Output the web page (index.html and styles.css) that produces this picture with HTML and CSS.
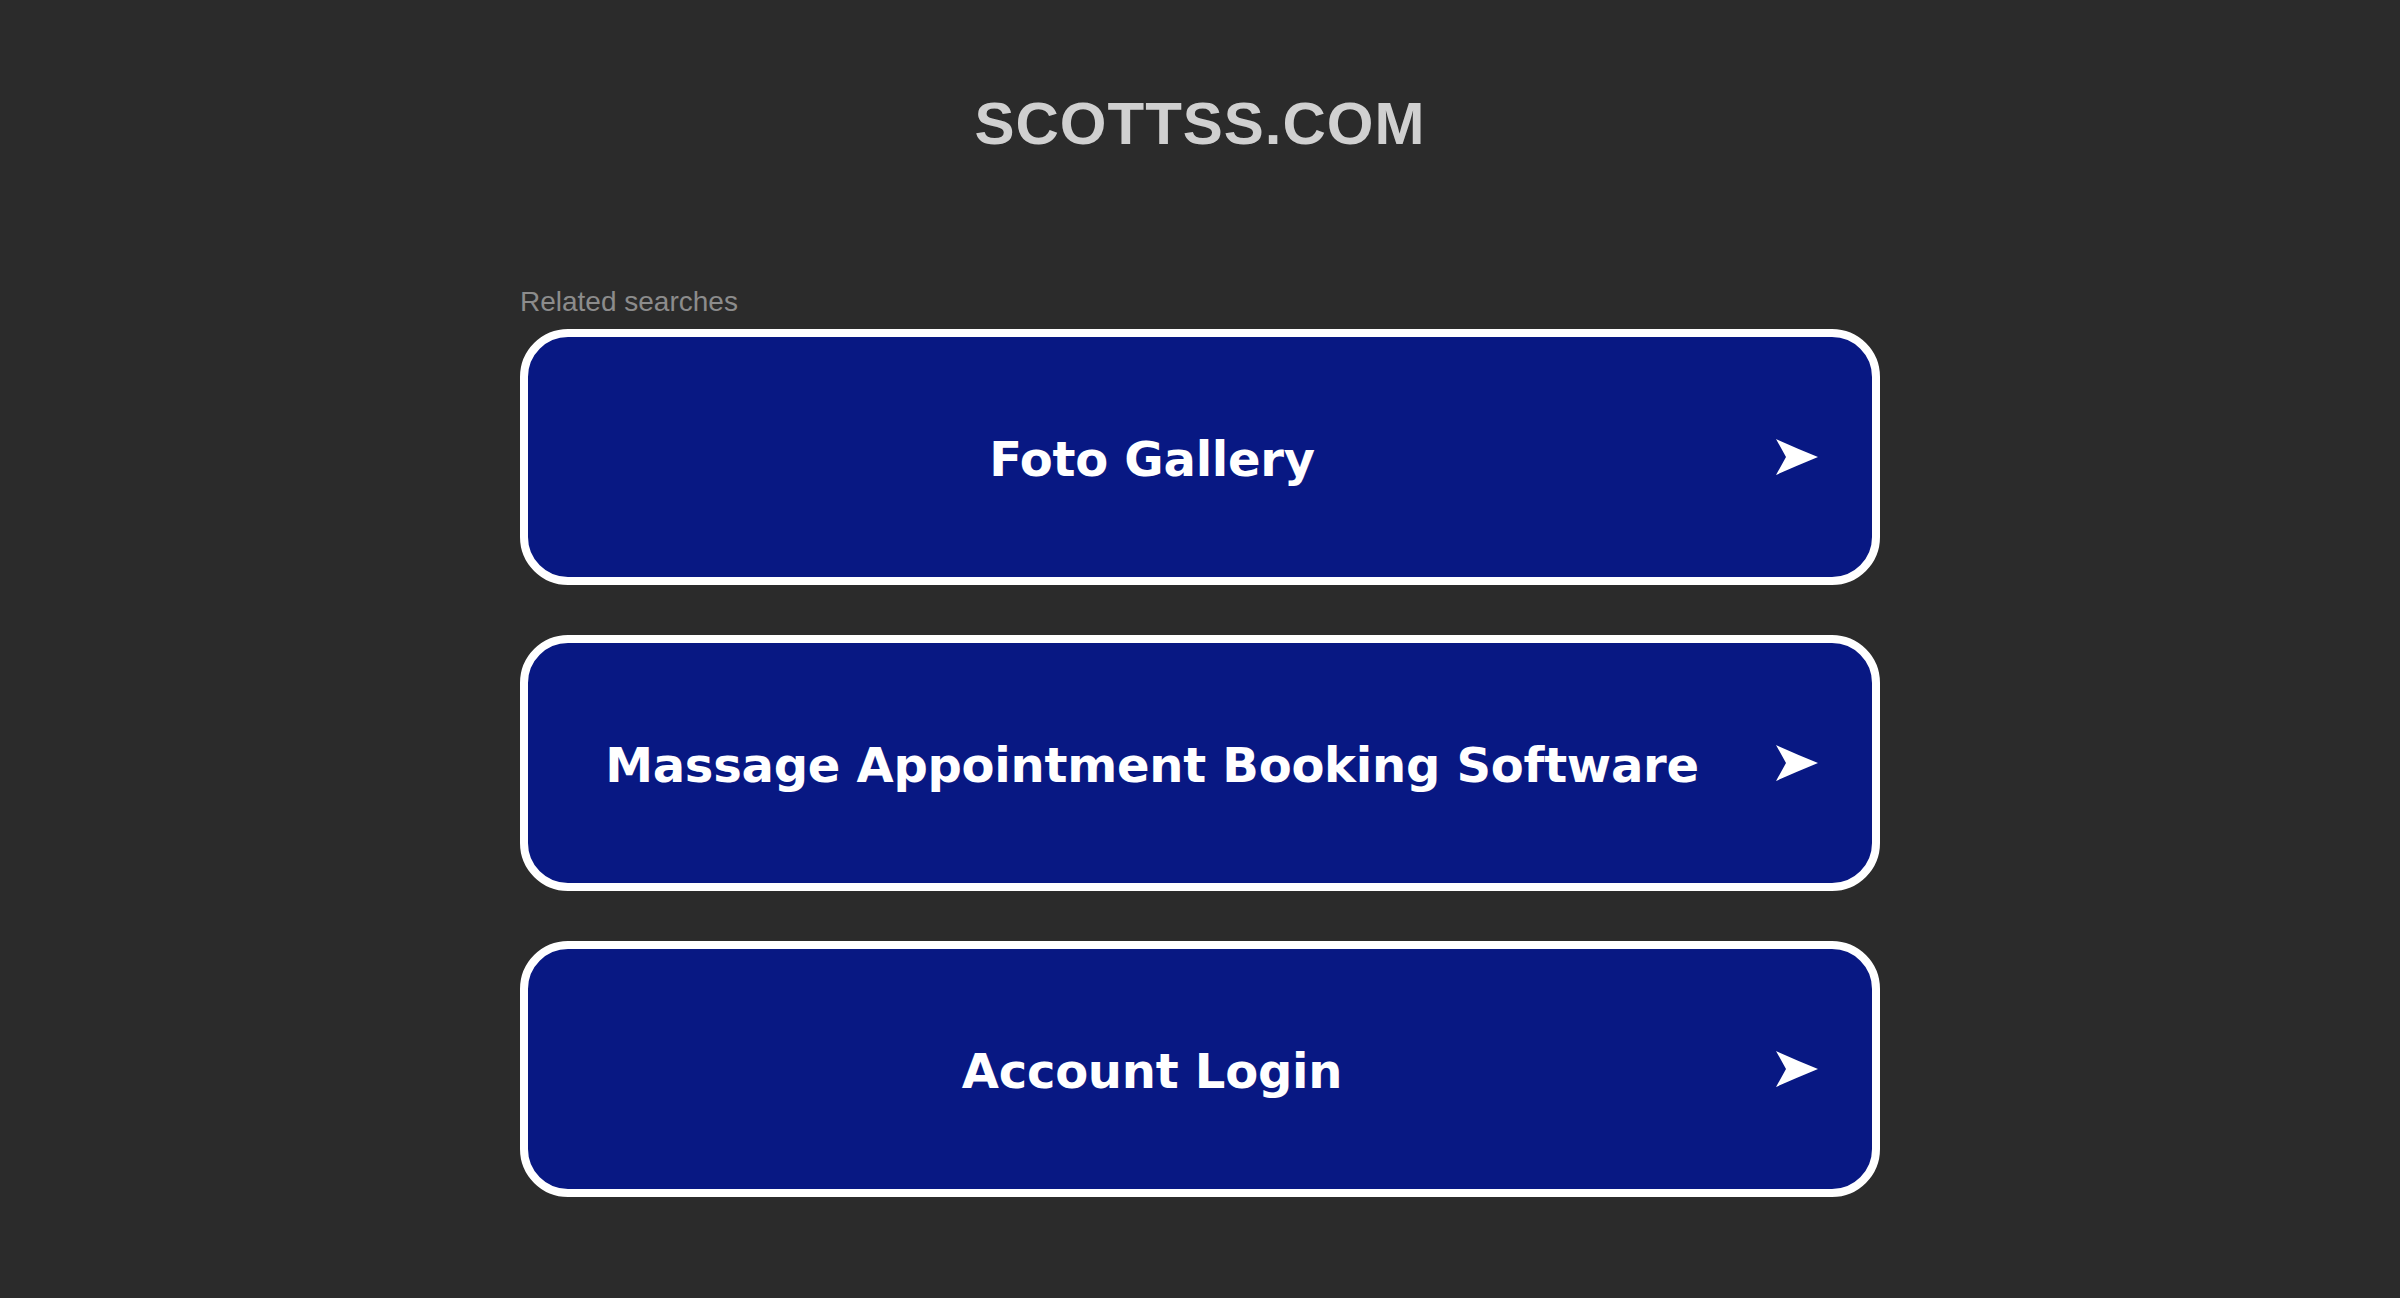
FILE: index.html
```html
<!DOCTYPE html>
<html lang="en">
<head>
    <meta charset="UTF-8">
    <meta name="viewport" content="width=device-width, initial-scale=1.0">
    <title>scottss.com</title>
    <link rel="stylesheet" href="styles.css">
</head>
<body>
    <header class="header">
        <h1 class="domain">SCOTTSS.COM</h1>
    </header>

    <div class="container">
        <p class="related">Related searches</p>

        <a href="#" class="search-link">
            <span class="search-text">Foto Gallery</span>
            <svg class="arrow" width="42" height="36" viewBox="0 0 42 36"><path d="M0 0 Q20 9 42 18 Q20 27 0 36 L10 18 Z" fill="#fff"/></svg>
        </a>
        <a href="#" class="search-link">
            <span class="search-text">Massage Appointment Booking Software</span>
            <svg class="arrow" width="42" height="36" viewBox="0 0 42 36"><path d="M0 0 Q20 9 42 18 Q20 27 0 36 L10 18 Z" fill="#fff"/></svg>
        </a>
        <a href="#" class="search-link">
            <span class="search-text">Account Login</span>
            <svg class="arrow" width="42" height="36" viewBox="0 0 42 36"><path d="M0 0 Q20 9 42 18 Q20 27 0 36 L10 18 Z" fill="#fff"/></svg>
        </a>
    </div>
</body>
</html>
```

FILE: styles.css
```css
body {
    font-family: "Liberation Sans", Arial, sans-serif;
    margin: 0;
    padding: 0;
    background-color: #2b2b2b;
}
.header {
    padding-top: 94px;
    text-align: center;
}
.domain {
    margin: 0;
    font-size: 60px;
    line-height: 1;
    font-weight: bold;
    letter-spacing: 1px;
    color: #d0d0d0;
}
.container {
    width: 1360px;
    margin: 134px auto 0;
}
.related {
    margin: 0 0 13px;
    font-size: 28px;
    line-height: 1;
    color: #8c8c8c;
}
.search-link {
    display: flex;
    align-items: center;
    gap: 54px;
    height: 256px;
    box-sizing: border-box;
    padding: 0 54px;
    margin-bottom: 50px;
    background-color: #081883;
    border: 8px solid #fff;
    border-radius: 48px;
    text-decoration: none;
}
.search-text {
    flex: 1;
    padding-top: 3px;
    text-align: center;
    font-family: "DejaVu Sans", Verdana, sans-serif;
    font-weight: bold;
    font-size: 48px;
    letter-spacing: -0.25px;
    color: #fff;
}
.arrow {
    flex-shrink: 0;
}
```
